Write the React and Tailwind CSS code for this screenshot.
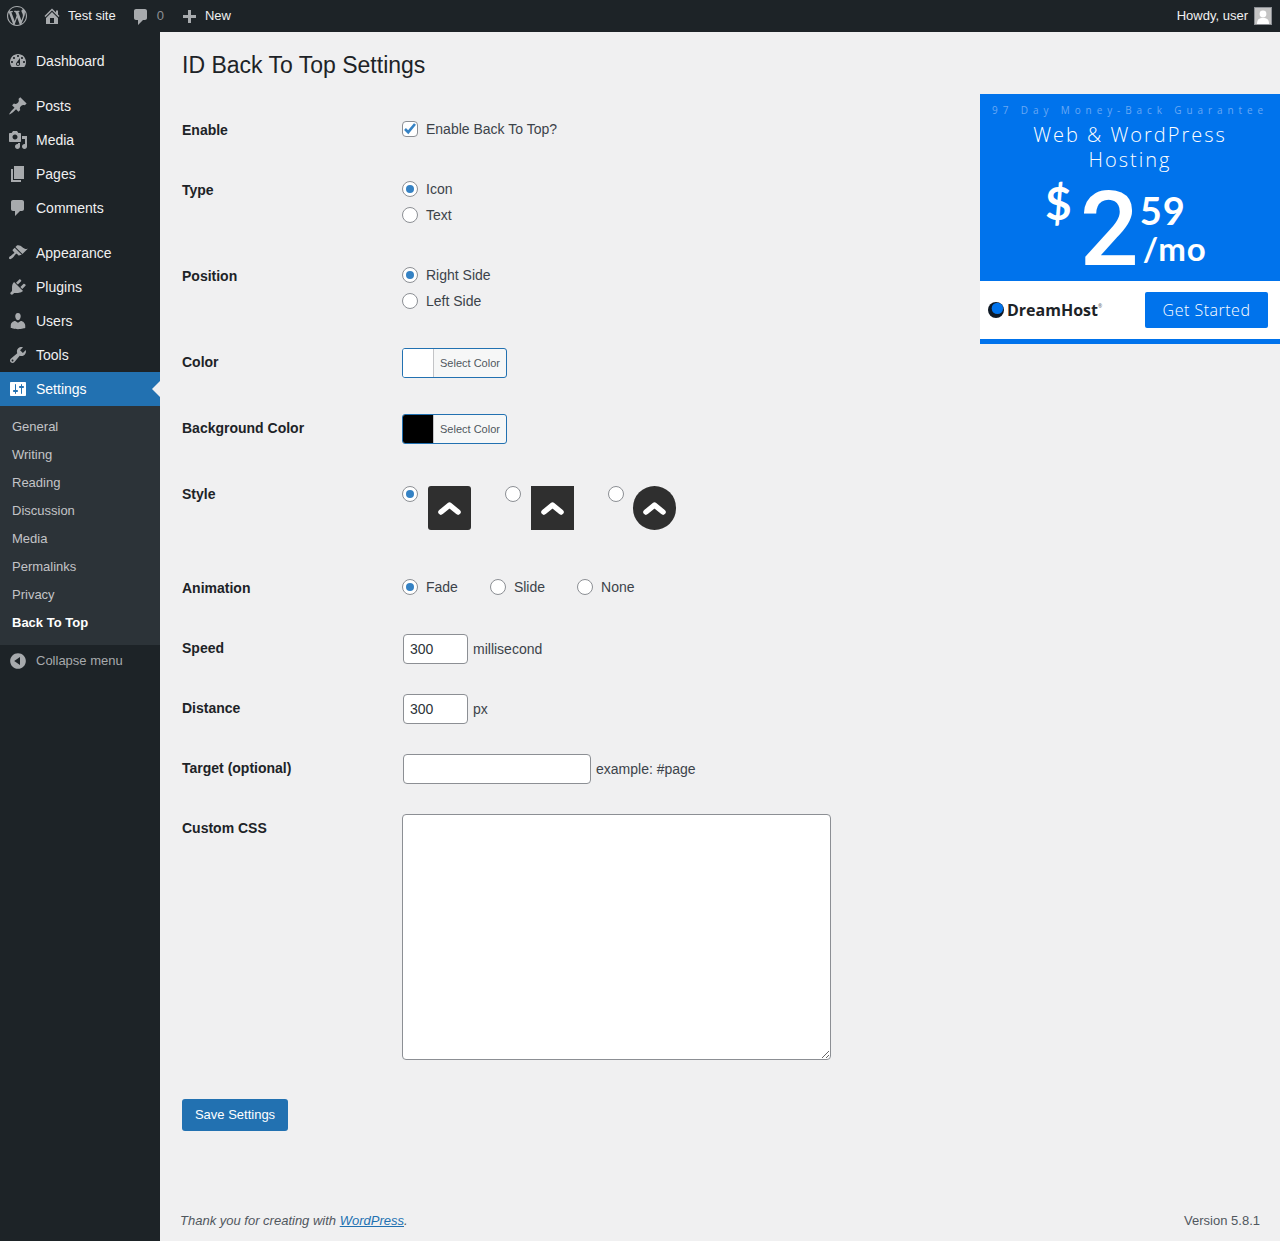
import React from "react";

const icons = {
  dashboard:
    "M3.76 16h12.48c1.1-1.37 1.76-3.11 1.76-5 0-4.42-3.58-8-8-8s-8 3.58-8 8c0 1.89.66 3.63 1.76 5zM10 4c.55 0 1 .45 1 1s-.45 1-1 1-1-.45-1-1 .45-1 1-1zM6 6c.55 0 1 .45 1 1s-.45 1-1 1-1-.45-1-1 .45-1 1-1zm8 0c.55 0 1 .45 1 1s-.45 1-1 1-1-.45-1-1 .45-1 1-1zm-5.37 5.55L12 7v6c0 1.1-.9 2-2 2s-2-.9-2-2c0-.57.24-1.08.63-1.45zM4 10c.55 0 1 .45 1 1s-.45 1-1 1-1-.45-1-1 .45-1 1-1zm12 0c.55 0 1 .45 1 1s-.45 1-1 1-1-.45-1-1 .45-1 1-1zm-5 3c0-.55-.45-1-1-1s-1 .45-1 1 .45 1 1 1 1-.45 1-1z",
  post: "M10.44 3.02l1.82-1.82 6.36 6.35-1.83 1.82c-1.05-.68-2.48-.57-3.41.36l-.75.75c-.92.93-1.04 2.35-.35 3.41l-1.83 1.82-2.41-2.41-2.8 2.79c-.42.42-3.38 2.71-3.8 2.29s1.86-3.39 2.28-3.81l2.79-2.79L4.1 9.36l1.83-1.82c1.05.69 2.48.57 3.4-.36l.75-.75c.93-.92 1.05-2.35.36-3.41z",
  media:
    "M13 11V4c0-.55-.45-1-1-1h-1.67L9 1H5L3.67 3H2c-.55 0-1 .45-1 1v7c0 .55.45 1 1 1h10c.55 0 1-.45 1-1zM7 4.5c1.38 0 2.5 1.12 2.5 2.5S8.38 9.5 7 9.5 4.5 8.38 4.5 7 5.62 4.5 7 4.5zM14 6h5v10.5c0 1.38-1.12 2.5-2.5 2.5S14 17.88 14 16.5s1.12-2.5 2.5-2.5c.17 0 .34.02.5.05V9h-3V6zm-4 8.05V13h2v3.5c0 1.38-1.12 2.5-2.5 2.5S7 17.88 7 16.5 8.12 14 9.5 14c.17 0 .34.02.5.05z",
  page: "M6 15V2h10v13H6zm-1 1h8v2H3V5h2v11z",
  comments:
    "M5 2h9c1.1 0 2 .9 2 2v7c0 1.1-.9 2-2 2h-2l-5 5v-5H5c-1.1 0-2-.9-2-2V4c0-1.1.9-2 2-2z",
  appearance:
    "M14.48 11.06L7.41 3.99l1.5-1.5c.5-.56 2.3-.47 3.51.32 1.21.8 1.43 1.28 2.91 2.1 1.18.64 2.45 1.26 4.45.85zm-.71.71L6.7 4.7 4.93 6.47c-.39.39-.39 1.02 0 1.41l1.06 1.06c.39.39.39 1.03 0 1.42-.6.6-1.43 1.11-2.21 1.69-.35.26-.7.53-1.01.84C1.43 13.23.4 14.89 1.3 15.8c.9.9 2.57-.13 3.92-1.47.31-.31.58-.66.85-1.02.57-.79 1.08-1.61 1.69-2.21.39-.39 1.02-.39 1.41 0l1.06 1.06c.39.39 1.02.39 1.41 0z",
  plugins:
    "M13.11 4.36L9.87 7.6 8 5.73l3.24-3.24c.35-.34 1.05-.2 1.56.32.52.51.66 1.21.31 1.55zm-8 1.77l.91-1.12 9.01 9.01-1.19.84c-.71.71-2.63 1.16-3.82 1.16H6.14L4.9 17.26c-.59.59-1.54.59-2.12 0-.59-.58-.59-1.53 0-2.12l1.24-1.24v-3.88c0-1.13.4-3.19 1.09-3.89zm7.26 3.97l3.24-3.24c.34-.35 1.04-.21 1.55.31.52.51.66 1.21.31 1.55l-3.24 3.25z",
  users:
    "M10 9.25c-2.27 0-2.73-3.44-2.73-3.44C7 4.02 7.82 2 9.97 2c2.16 0 2.98 2.02 2.71 3.81 0 0-.41 3.44-2.68 3.44zm0 2.57L12.72 10c2.39 0 4.52 2.33 4.52 4.53v2.49s-3.65 1.13-7.24 1.13c-3.65 0-7.24-1.13-7.24-1.13v-2.49c0-2.25 1.94-4.48 4.47-4.48z",
  tools:
    "M16.68 9.77c-1.34 1.34-3.3 1.67-4.95.99l-5.41 6.52c-.99.99-2.59.99-3.58 0s-.99-2.59 0-3.57l6.52-5.42c-.68-1.65-.35-3.61.99-4.95 1.28-1.28 3.12-1.62 4.72-1.06l-2.89 2.89 2.82 2.82 2.86-2.87c.53 1.58.18 3.39-1.08 4.65zM3.81 16.21c.4.39 1.04.39 1.43 0 .4-.4.4-1.04 0-1.43-.39-.4-1.03-.4-1.43 0-.39.39-.39 1.03 0 1.43z",
  settings:
    "M18 16V4c0-.55-.45-1-1-1H3c-.55 0-1 .45-1 1v12c0 .55.45 1 1 1h14c.55 0 1-.45 1-1zM8 11h1c.55 0 1 .45 1 1s-.45 1-1 1H8v1.5c0 .28-.22.5-.5.5s-.5-.22-.5-.5V13H6c-.55 0-1-.45-1-1s.45-1 1-1h1V5.5c0-.28.22-.5.5-.5s.5.22.5.5V11zm5-2h-1c-.55 0-1-.45-1-1s.45-1 1-1h1V5.5c0-.28.22-.5.5-.5s.5.22.5.5V7h1c.55 0 1 .45 1 1s-.45 1-1 1h-1v5.5c0 .28-.22.5-.5.5s-.5-.22-.5-.5V9z",
  home: "M16 8.5l1.53 1.53-1.06 1.06L10 4.62l-6.47 6.47-1.06-1.06L10 2.5l4 4v-2h2v4zm-6-2.46l6 5.99V18H4v-5.97zM12 17v-5H8v5h4z",
  plus: "M17 7v3h-5v5H9v-5H4V7h5V2h3v5h5z",
  collapse:
    "M10 2.16c4.33 0 7.84 3.51 7.84 7.84s-3.51 7.84-7.84 7.84S2.16 14.33 2.16 10 5.71 2.16 10 2.16zm2 11.72V6.12L6.18 9.97z",
  wp: "M20 10c0-5.51-4.49-10-10-10C4.48 0 0 4.49 0 10c0 5.52 4.48 10 10 10 5.51 0 10-4.48 10-10zM7.78 15.37L4.37 6.22c.55-.02 1.17-.08 1.17-.08.5-.06.44-1.13-.06-1.11 0 0-1.45.11-2.37.11-.18 0-.37 0-.58-.01C4.12 2.69 6.87 1.11 10 1.11c2.33 0 4.45.87 6.05 2.34-.68-.11-1.65.39-1.65 1.58 0 .74.45 1.36.9 2.1.35.61.55 1.36.55 2.46 0 1.49-1.4 5-1.4 5l-3.03-8.37c.54-.02.82-.17.82-.17.5-.05.44-1.25-.06-1.22 0 0-1.44.12-2.38.12-.87 0-2.33-.12-2.33-.12-.5-.03-.56 1.2-.06 1.22l.92.08 1.26 3.41zM17.41 10c.24-.64.74-1.87.43-4.25.7 1.29 1.05 2.71 1.05 4.25 0 3.29-1.73 6.24-4.4 7.78.97-2.59 1.94-5.2 2.92-7.78zM6.1 18.09C3.12 16.65 1.11 13.53 1.11 10c0-1.3.23-2.48.72-3.59C3.25 10.3 4.67 14.2 6.1 18.09zm4.03-6.63l2.58 6.98c-.86.29-1.76.45-2.71.45-.79 0-1.57-.11-2.29-.33.81-2.38 1.62-4.74 2.42-7.1z",
};

function Dashicon({ name, className }) {
  return (
    <svg viewBox="0 0 20 20" fill="currentColor" fillRule="evenodd" className={className}>
      <path d={icons[name]} />
    </svg>
  );
}

const topMenu = [
  { label: "Dashboard", icon: "dashboard", gap: false },
  { label: "Posts", icon: "post", gap: true },
  { label: "Media", icon: "media", gap: false },
  { label: "Pages", icon: "page", gap: false },
  { label: "Comments", icon: "comments", gap: false },
  { label: "Appearance", icon: "appearance", gap: true },
  { label: "Plugins", icon: "plugins", gap: false },
  { label: "Users", icon: "users", gap: false },
  { label: "Tools", icon: "tools", gap: false },
];

const subMenu = ["General", "Writing", "Reading", "Discussion", "Media", "Permalinks", "Privacy"];

function AdminBar() {
  return (
    <div className="flex h-8 items-center bg-[#1d2327] text-[13px] text-[#f0f0f1]">
      <Dashicon name="wp" className="ml-[7px] h-5 w-5 text-[#a7aaad]" />
      <Dashicon name="home" className="ml-[15px] h-5 w-5 text-[#a7aaad]" />
      <span className="ml-[6px]">Test site</span>
      <Dashicon name="comments" className="ml-[15px] mt-[2px] h-5 w-5 text-[#a7aaad]" />
      <span className="ml-[6px] text-[#8c8f94]">0</span>
      <Dashicon name="plus" className="ml-[15px] mt-1 h-5 w-5 text-[#a7aaad]" />
      <span className="ml-[6px]">New</span>
      <span className="ml-auto">Howdy, user</span>
      <span className="ml-[6px] mr-2 flex h-[18px] w-[18px] items-end justify-center overflow-hidden border border-[#8c8f94] bg-[#c4c4c4]">
        <svg viewBox="0 0 16 16" className="h-4 w-4" fill="#ffffff">
          <circle cx="8" cy="6" r="3.4" />
          <path d="M2 16c0-4.500 2-6 6-6s6 1.500 6 6z" />
        </svg>
      </span>
    </div>
  );
}

function Sidebar() {
  return (
    <aside className="flex w-40 shrink-0 flex-col bg-[#1d2327] pt-3 text-sm text-[#f0f0f1]">
      {topMenu.map((item) => (
        <div key={item.label} className={`flex h-[34px] items-center ${item.gap ? "mt-[11px]" : ""}`}>
          <Dashicon name={item.icon} className="ml-2 h-5 w-5 text-[#a7aaad]" />
          <span className="ml-2">{item.label}</span>
        </div>
      ))}
      <div className="relative flex h-[34px] items-center bg-[#2271b1] text-white">
        <Dashicon name="settings" className="ml-2 h-5 w-5 text-white" />
        <span className="ml-2">Settings</span>
        <span className="absolute right-0 top-[9px] border-y-8 border-r-8 border-y-transparent border-r-[#f0f0f1]" />
      </div>
      <div className="flex flex-col bg-[#2c3338] pb-[8px] pt-[7px] text-[13px] text-[#c3c4c7]">
        {subMenu.map((item) => (
          <div key={item} className="flex h-7 items-center pl-3">
            {item}
          </div>
        ))}
        <div className="flex h-7 items-center pl-3 font-bold text-white">Back To Top</div>
      </div>
      <div className="mt-[1px] flex h-[30px] items-center text-[13px] text-[#a7aaad]">
        <Dashicon name="collapse" className="ml-2 h-5 w-5 text-[#a7aaad]" />
        <span className="ml-2">Collapse menu</span>
      </div>
    </aside>
  );
}

function Radio({ checked }) {
  return (
    <span className="flex h-4 w-4 shrink-0 items-center justify-center rounded-full border border-[#8c8f94] bg-white">
      {checked && <span className="h-2 w-2 rounded-full bg-[#3582c4]" />}
    </span>
  );
}

function RadioLine({ label, checked }) {
  return (
    <div className="flex h-[26px] items-center gap-2">
      <Radio checked={checked} />
      <span>{label}</span>
    </div>
  );
}

function Row({ label, children, contentClass }) {
  return (
    <div className="flex">
      <div className="w-[220px] shrink-0 pt-5 text-sm font-bold leading-[18px] text-[#1d2327]">{label}</div>
      <div className={`pt-[15px] ${contentClass}`}>{children}</div>
    </div>
  );
}

function ColorPicker({ swatch }) {
  return (
    <div className="flex h-[30px] w-[105px] overflow-hidden rounded-[3px] border border-[#2271b1] bg-[#f6f7f7]">
      <span className={`w-[31px] border-r border-[#c3c4c7] ${swatch}`} />
      <span className="flex-1 pl-[6px] text-[11px] leading-[28px] text-[#50575e]">Select Color</span>
    </div>
  );
}

function Chevron() {
  return (
    <svg viewBox="0 0 43 44" className="h-[44px] w-[43px]">
      <path d="M13 26l8.500-7 8.500 7" fill="none" stroke="#ffffff" strokeWidth="5.500" strokeLinecap="round" strokeLinejoin="round" />
    </svg>
  );
}

function AdBanner() {
  return (
    <div className="flex h-[250px] w-[300px] shrink-0 flex-col bg-[#0073ec] font-['Open_Sans',sans-serif] text-white">
      <div className="flex h-[187px] flex-col items-center pt-[9px]">
        <div className="whitespace-nowrap text-[10px] leading-[14px] tracking-[4.9px] text-[#69a8f4]">
          97 Day Money-Back Guarantee
        </div>
        <div className="mt-[5px] text-center text-[20px] font-light leading-[25px] tracking-[2px]">
          Web &amp; WordPress
          <br />
          Hosting
        </div>
        <div className="ml-[65px] mt-[6px] flex items-start self-start font-['Lato',sans-serif] font-bold">
          <span className="text-[46px] leading-[50px]">$</span>
          <span className="ml-[8px] mt-[12px] font-['Roboto',sans-serif] text-[104px] font-medium leading-[80px]">2</span>
          <div className="ml-[1px] flex flex-col">
            <span className="mt-[12px] text-[38px] leading-[40px] tracking-[1px]">59</span>
            <span className="ml-[3px] text-[33px] leading-[36px] tracking-[1px]">/mo</span>
          </div>
        </div>
      </div>
      <div className="flex h-[58px] items-center bg-white pl-2 pr-3">
        <svg viewBox="0 0 16 16" className="h-4 w-4">
          <circle cx="8" cy="8" r="8" fill="#0f1a26" />
          <circle cx="9.400" cy="6.400" r="5.700" fill="#0073ec" />
        </svg>
        <span className="ml-[3px] text-[16px] font-bold text-[#1d2327]">DreamHost</span>
        <span className="mb-[8px] text-[5px] leading-[5px] text-[#50575e]">®</span>
        <span className="ml-auto flex h-9 w-[123px] items-center justify-center rounded-[2px] bg-[#0073ec] text-[16px] font-light tracking-[0.5px] text-white">
          Get Started
        </span>
      </div>
      <div className="h-[5px] bg-[#0073ec]" />
    </div>
  );
}

function SettingsForm() {
  return (
    <div className="flex-1 pl-[2px] pt-[7px] text-sm text-[#3c434a]">
      <Row label="Enable" contentClass="pb-[19px]">
        <div className="flex h-[26px] items-center gap-2">
          <span className="flex h-4 w-4 items-center justify-center rounded-[4px] border border-[#8c8f94] bg-white">
            <svg viewBox="0 0 16 16" className="h-4 w-4 shrink-0">
              <path d="M3 8l3.200 3.200L13 3" fill="none" stroke="#3582c4" strokeWidth="2.600" />
            </svg>
          </span>
          <span>Enable Back To Top?</span>
        </div>
      </Row>
      <Row label="Type" contentClass="pb-[19px]">
        <RadioLine label="Icon" checked />
        <RadioLine label="Text" />
      </Row>
      <Row label="Position" contentClass="pb-[19px]">
        <RadioLine label="Right Side" checked />
        <RadioLine label="Left Side" />
      </Row>
      <Row label="Color" contentClass="pb-[21px]">
        <ColorPicker swatch="bg-white" />
      </Row>
      <Row label="Background Color" contentClass="pb-[21px]">
        <ColorPicker swatch="bg-black" />
      </Row>
      <Row label="Style" contentClass="pb-[29px]">
        <div className="flex items-start pt-[6px]">
          <Radio checked />
          <span className="ml-[10px] rounded-[3px] bg-[#2f2f2f]">
            <Chevron />
          </span>
          <span className="ml-[34px]">
            <Radio />
          </span>
          <span className="ml-[10px] bg-[#2f2f2f]">
            <Chevron />
          </span>
          <span className="ml-[34px]">
            <Radio />
          </span>
          <span className="ml-[9px] rounded-full bg-[#2f2f2f]">
            <Chevron />
          </span>
        </div>
      </Row>
      <Row label="Animation" contentClass="pb-[19px]">
        <div className="flex gap-8">
          <RadioLine label="Fade" checked />
          <RadioLine label="Slide" />
          <RadioLine label="None" />
        </div>
      </Row>
      <Row label="Speed" contentClass="pb-[15px]">
        <div className="flex items-center">
          <input
            type="text"
            defaultValue="300"
            className="ml-px h-[30px] w-[65px] rounded-[4px] border border-[#8c8f94] bg-white px-[6px] text-sm text-[#2c3338]"
          />
          <span className="ml-[5px]">millisecond</span>
        </div>
      </Row>
      <Row label="Distance" contentClass="pb-[15px]">
        <div className="flex items-center">
          <input
            type="text"
            defaultValue="300"
            className="ml-px h-[30px] w-[65px] rounded-[4px] border border-[#8c8f94] bg-white px-[6px] text-sm text-[#2c3338]"
          />
          <span className="ml-[5px]">px</span>
        </div>
      </Row>
      <Row label="Target (optional)" contentClass="pb-[15px]">
        <div className="flex items-center">
          <input
            type="text"
            className="ml-px h-[30px] w-[188px] rounded-[4px] border border-[#8c8f94] bg-white px-[6px] text-sm text-[#2c3338]"
          />
          <span className="ml-[5px]">example: #page</span>
        </div>
      </Row>
      <Row label="Custom CSS" contentClass="pb-[15px]">
        <textarea className="block h-[246px] w-[429px] rounded-[4px] border border-[#8c8f94] bg-white" />
      </Row>
      <button className="mt-[24px] h-8 w-[106px] rounded-[3px] bg-[#2271b1] text-[13px] text-white">Save Settings</button>
    </div>
  );
}

export default function App() {
  return (
    <div className="flex min-h-screen flex-col bg-[#f0f0f1] font-['Liberation_Sans',Arial,sans-serif]">
      <AdminBar />
      <div className="flex flex-1">
        <Sidebar />
        <main className="flex flex-1 flex-col">
          <div className="h-[62px] pl-[22px] pt-[18px]">
            <h1 className="text-[23px] font-normal leading-[30px] text-[#1d2327]">ID Back To Top Settings</h1>
          </div>
          <div className="flex pl-5">
            <SettingsForm />
            <AdBanner />
          </div>
          <footer className="mt-auto flex items-center justify-between px-5 pb-[11px] text-[13px] text-[#50575e]">
            <span className="italic">
              Thank you for creating with <span className="text-[#2271b1] underline">WordPress</span>.
            </span>
            <span>Version 5.8.1</span>
          </footer>
        </main>
      </div>
    </div>
  );
}
